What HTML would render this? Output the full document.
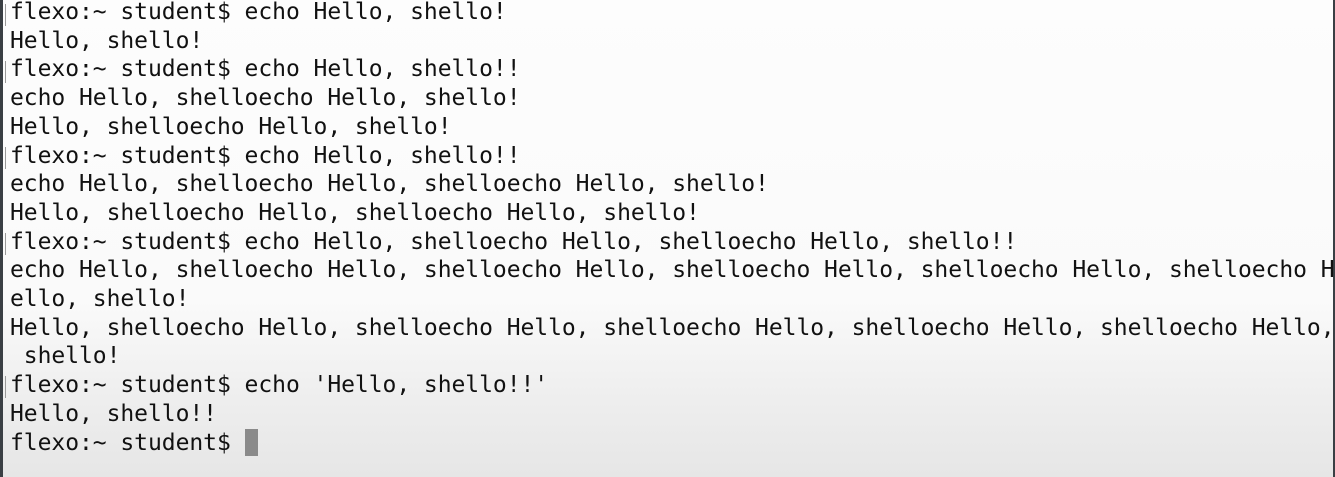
<!DOCTYPE html>
<html><head><meta charset="utf-8"><style>
html,body{margin:0;padding:0;}
body{width:1335px;height:477px;overflow:hidden;position:relative;
background:linear-gradient(to bottom,#fdfdfd 0px,#fafafa 300px,#eeeeee 400px,#e6e6e6 477px);}
.l{position:absolute;left:0;top:0;width:3px;height:477px;background:#3a3f44;}
.r{position:absolute;right:0;top:0;width:2px;height:477px;background:#3a3f44;}
pre{position:absolute;left:10px;top:-2px;margin:0;font-family:"DejaVu Sans Mono","Liberation Mono",monospace;
font-size:23px;line-height:28.7px;color:#111;letter-spacing:-0.05px;white-space:pre;}
.b{position:absolute;left:5px;width:1px;height:22px;background:#999;}
.cur{display:inline-block;width:13px;height:27px;background:#8a8a8a;vertical-align:-6px;}
</style></head><body>
<div class="l"></div><div class="r"></div>
<div class="b" style="top:4px"></div>
<div class="b" style="top:61px"></div>
<div class="b" style="top:147px"></div>
<div class="b" style="top:233px"></div>
<div class="b" style="top:376px"></div>
<pre>flexo:~ student$ echo Hello, shello!
Hello, shello!
flexo:~ student$ echo Hello, shello!!
echo Hello, shelloecho Hello, shello!
Hello, shelloecho Hello, shello!
flexo:~ student$ echo Hello, shello!!
echo Hello, shelloecho Hello, shelloecho Hello, shello!
Hello, shelloecho Hello, shelloecho Hello, shello!
flexo:~ student$ echo Hello, shelloecho Hello, shelloecho Hello, shello!!
echo Hello, shelloecho Hello, shelloecho Hello, shelloecho Hello, shelloecho Hello, shelloecho H
ello, shello!
Hello, shelloecho Hello, shelloecho Hello, shelloecho Hello, shelloecho Hello, shelloecho Hello,
 shello!
flexo:~ student$ echo 'Hello, shello!!'
Hello, shello!!
flexo:~ student$ <span class="cur"></span></pre>
</body></html>
